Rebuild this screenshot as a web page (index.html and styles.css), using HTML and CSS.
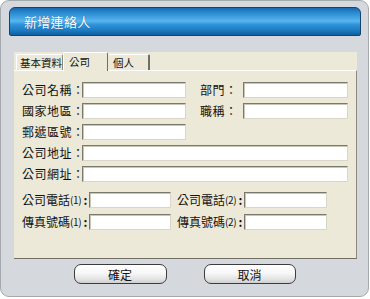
FILE: index.html
```html
<!DOCTYPE html>
<html lang="zh-Hant">
<head>
<meta charset="utf-8">
<link rel="stylesheet" href="styles.css">
</head>
<body>
<div class="window">
  <div class="titlebar"><span class="title">新增連絡人</span></div>
  <div class="tabbox">
    <div class="tabs">
      <div class="tab first">基本資料</div>
      <div class="tab active">公司</div>
      <div class="tab last">個人</div>
    </div>
    <div class="panel">
      <div class="grid">
        <label class="lbl">公司名稱：</label>
        <div class="input"></div>
        <span></span>
        <label class="lbl">部門：</label>
        <div class="input"></div>

        <label class="lbl">國家地區：</label>
        <div class="input"></div>
        <span></span>
        <label class="lbl">職稱：</label>
        <div class="input"></div>

        <label class="lbl">郵遞區號：</label>
        <div class="input"></div>
        <span class="rest"></span>

        <label class="lbl">公司地址：</label>
        <div class="input wide"></div>

        <label class="lbl">公司網址：</label>
        <div class="input wide"></div>
      </div>
      <div class="grid phones">
        <label class="lbl">公司電話<small>(1)</small><span class="colon">:</span></label>
        <div class="input"></div>
        <span></span>
        <label class="lbl">公司電話<small>(2)</small><span class="colon">:</span></label>
        <div class="input"></div>

        <label class="lbl">傳真號碼<small>(1)</small><span class="colon">:</span></label>
        <div class="input"></div>
        <span></span>
        <label class="lbl">傳真號碼<small>(2)</small><span class="colon">:</span></label>
        <div class="input"></div>
      </div>
    </div>
  </div>
  <div class="buttons">
    <button class="btn ok">確定</button>
    <button class="btn cancel">取消</button>
  </div>
</div>
</body>
</html>
```
FILE: styles.css
```css
html, body {
  margin: 0;
  padding: 0;
  background: #ffffff;
}
body {
  font-family: "Noto Sans CJK TC", "Noto Sans CJK SC", sans-serif;
  font-size: 12px;
  color: #111;
}
.window {
  box-sizing: border-box;
  width: 369px;
  height: 297px;
  border: 1px solid #a4a9ae;
  border-radius: 9px;
  background: #d5d9dd;
  padding: 6px 7px 0 8px;
}
.titlebar {
  box-sizing: border-box;
  height: 29px;
  border: 1px solid #17426a;
  border-radius: 6px 6px 2px 2px;
  background: linear-gradient(#1a6aae 0%, #2a8bd2 18%, #49a9e6 40%, #5ab6ee 48%, #2f93d8 62%, #1d7cc3 82%, #0f5f9e 100%);
  display: flex;
  align-items: center;
  padding-left: 14px;
}
.title {
  color: #ffffff;
  font-size: 13px;
  letter-spacing: 0.3px;
  text-shadow: 0 0 1px rgba(0, 40, 90, 0.5);
}
.tabbox {
  margin-top: 16px;
  margin-left: 5px;
  width: 343px;
  height: 207px;
  background: #ece9d8;
  display: flex;
  flex-direction: column;
}
.tabs {
  height: 18px;
  display: flex;
  align-items: flex-end;
  padding-left: 2px;
}
.tab {
  box-sizing: border-box;
  height: 16px;
  padding: 0 0 0 3px;
  line-height: 15px;
  font-size: 10.5px;
  white-space: nowrap;
  border-top: 1px solid #ffffff;
  border-left: 1px solid #ffffff;
  border-right: 1px solid #8d8a7e;
  border-radius: 2px 2px 0 0;
  width: 47px;
}
.tab.active {
  height: 19px;
  width: 45px;
  padding-left: 5px;
  line-height: 17px;
  margin-bottom: -1px;
  background: #ece9d8;
  position: relative;
  border-right-color: #716f64;
}
.tab.last {
  width: 42px;
  padding-left: 5px;
  border-left: none;
  border-right: 2px solid #716f64;
}
.panel {
  box-sizing: border-box;
  flex: 1;
  border-top: 1px solid #ffffff;
  border-right: 1px solid #8d8a7e;
  border-bottom: 1px solid #716f64;
  padding: 11px 0 0 8px;
}
.grid {
  display: grid;
  grid-template-columns: 60px 104px 14px 43px 105px;
  grid-auto-rows: 16px;
  row-gap: 5px;
  align-items: center;
}
.grid .wide {
  grid-column: 2 / 6;
}
.grid .rest {
  grid-column: 3 / 6;
}
.grid.phones {
  grid-template-columns: 67px 82px 6px 67px 83px;
  margin-top: 10px;
  row-gap: 6px;
}
.lbl {
  white-space: nowrap;
  line-height: 16px;
  letter-spacing: 0.5px;
}
.phones .lbl {
  letter-spacing: 0;
}
.lbl small {
  font-size: 10px;
  letter-spacing: -0.3px;
  vertical-align: 1px;
}
.lbl .colon {
  padding-left: 2px;
  font-weight: bold;
}
.input {
  box-sizing: border-box;
  height: 16px;
  background: #ffffff;
  border-top: 1px solid #7b786c;
  border-left: 1px solid #7b786c;
  border-right: 1px solid #d9d6c8;
  border-bottom: 1px solid #d9d6c8;
  box-shadow: inset 1px 1px 0 #c9c6b8;
}
.buttons {
  display: flex;
  justify-content: center;
  gap: 37px;
  margin-top: 5px;
  padding-right: 1px;
}
.btn {
  box-sizing: border-box;
  height: 20px;
  width: 93px;
  border: 1px solid #3c3c3c;
  border-radius: 7px;
  background: linear-gradient(#ffffff 0%, #f7f7f7 45%, #e2e2e2 80%, #cfcfcf 100%);
  font-family: "Noto Sans CJK TC", "Noto Sans CJK SC", sans-serif;
  font-size: 12px;
  color: #111;
  padding: 0;
  line-height: 17px;
}
.btn.cancel {
  width: 92px;
}
```
